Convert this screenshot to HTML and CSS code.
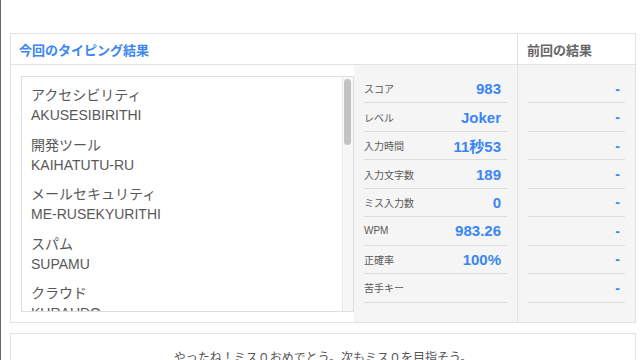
FILE: index.html
```html
<!DOCTYPE html>
<html lang="ja">
<head>
<meta charset="utf-8">
<title>タイピング結果</title>
<link rel="stylesheet" href="styles.css">
</head>
<body>
<div class="page">
  <div class="top"></div>
  <section class="result">
    <div class="head head-now">今回のタイピング結果</div>
    <div class="head head-prev">前回の結果</div>
    <div class="words-cell">
      <div class="words">
        <ul class="word-list">
          <li><span>アクセシビリティ</span><span>AKUSESIBIRITHI</span></li>
          <li><span>開発ツール</span><span>KAIHATUTU-RU</span></li>
          <li><span>メールセキュリティ</span><span>ME-RUSEKYURITHI</span></li>
          <li><span>スパム</span><span>SUPAMU</span></li>
          <li><span>クラウド</span><span>KURAUDO</span></li>
        </ul>
        <div class="scrollbar"><div class="thumb"></div></div>
      </div>
    </div>
    <div class="stats">
      <div class="row"><span class="label">スコア</span><span class="value">983</span></div>
      <div class="row"><span class="label">レベル</span><span class="value">Joker</span></div>
      <div class="row"><span class="label">入力時間</span><span class="value">11秒53</span></div>
      <div class="row"><span class="label">入力文字数</span><span class="value">189</span></div>
      <div class="row"><span class="label">ミス入力数</span><span class="value">0</span></div>
      <div class="row"><span class="label">WPM</span><span class="value">983.26</span></div>
      <div class="row"><span class="label">正確率</span><span class="value">100%</span></div>
      <div class="row"><span class="label">苦手キー</span><span class="value"></span></div>
    </div>
    <div class="prev">
      <div class="row"><span class="value dash">-</span></div>
      <div class="row"><span class="value dash">-</span></div>
      <div class="row"><span class="value dash">-</span></div>
      <div class="row"><span class="value dash">-</span></div>
      <div class="row"><span class="value dash">-</span></div>
      <div class="row"><span class="value dash">-</span></div>
      <div class="row"><span class="value dash">-</span></div>
      <div class="row"><span class="value dash">-</span></div>
    </div>
  </section>
  <section class="message">やったね！ミス０おめでとう。次もミス０を目指そう。</section>
</div>
</body>
</html>
```
FILE: styles.css
```css
* { box-sizing: border-box; }
html, body { margin: 0; padding: 0; background: #fff; overflow: hidden; }
body {
  font-family: "Liberation Sans", "Noto Sans CJK JP", sans-serif;
  color: #555;
}
.page {
  width: 640px;
  height: 360px;
  border-left: 1px solid #6a6a6a;
  padding: 0 4px 0 9px;
}
.top { height: 33px; }
.result {
  display: grid;
  grid-template-columns: 343px 163px 1fr;
  grid-template-rows: 31px 257px;
  border: 1px solid #e2e2e2;
}
.head {
  font-size: 13px;
  font-weight: bold;
  display: flex;
  align-items: center;
  border-bottom: 1px solid #e2e2e2;
}
.head-now {
  grid-column: 1 / 3;
  color: #3b86f2;
  padding-left: 8px;
}
.head-prev {
  color: #666;
  padding-left: 9px;
  border-left: 1px solid #e2e2e2;
}
.words-cell {
  padding: 11px 0 10px 10px;
  background: #fff;
}
.words {
  height: 236px;
  border: 1px solid #dedede;
  display: flex;
  overflow: hidden;
}
.word-list {
  flex: 1;
  list-style: none;
  margin: 0;
  padding: 8px 0 0 9px;
  overflow: hidden;
}
.word-list li {
  display: flex;
  flex-direction: column;
  font-size: 14px;
  line-height: 20px;
  margin-bottom: 9.5px;
  color: #585858;
}
.scrollbar {
  width: 11px;
  background: #f7f7f7;
  border-left: 1px solid #ececec;
  padding: 2px 0 0 1px;
}
.thumb {
  width: 7px;
  height: 66px;
  border-radius: 4px;
  background: #c2c2c2;
}
.stats, .prev {
  background: #f5f5f5;
  padding: 10px 10px 0 10px;
}
.prev {
  border-left: 1px solid #e2e2e2;
  padding-right: 10px;
}
.row {
  height: 28.45px;
  border-bottom: 1px solid #dcdcdc;
  display: flex;
  align-items: center;
  justify-content: space-between;
}
.prev .row { justify-content: flex-end; }
.label {
  font-size: 10px;
  color: #5a5a5a;
}
.value {
  font-size: 15px;
  font-weight: bold;
  color: #3b86f2;
  padding-right: 6px;
}
.dash { padding-right: 5px; font-size: 14px; }
.message {
  margin-top: 10px;
  border: 1px solid #e2e2e2;
  height: 60px;
  padding-top: 14px;
  text-align: center;
  font-size: 12px;
  color: #555;
}
```
